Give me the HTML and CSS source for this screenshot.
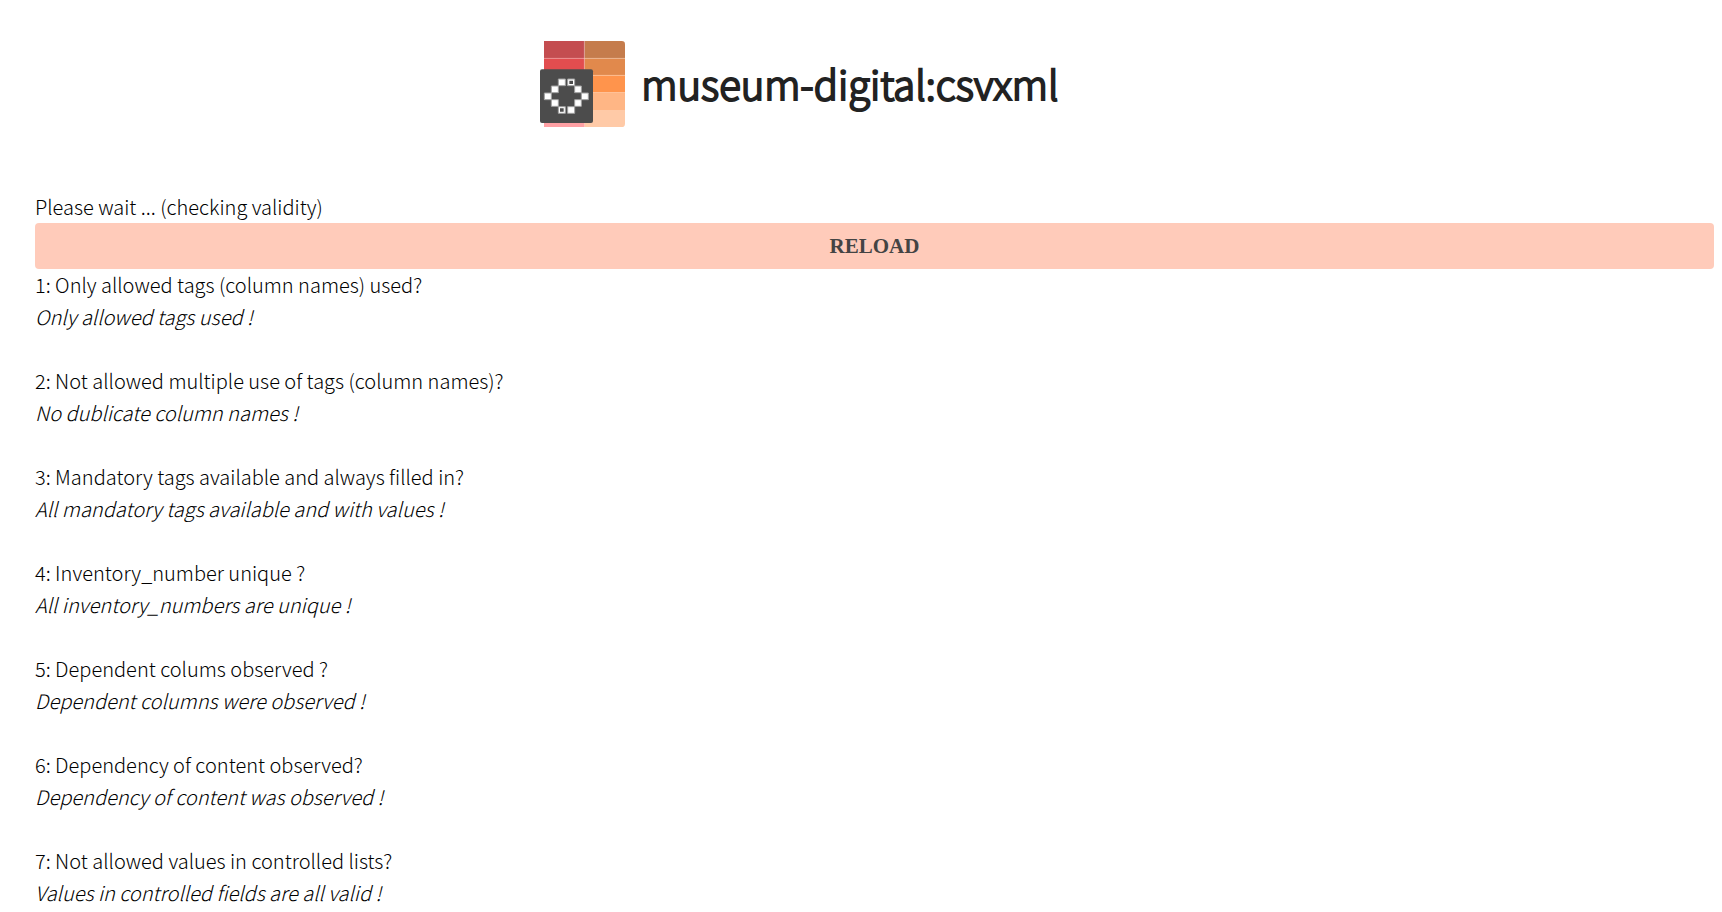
FILE: index.html
```html
<!DOCTYPE html>
<html lang="en">
<head>
<meta charset="utf-8">
<title>museum-digital:csvxml</title>
<link rel="stylesheet" href="styles.css">
</head>
<body>
<header class="masthead">
  <svg class="logo" viewBox="30 33 255 258" aria-hidden="true">
    <path fill="#c44d50" d="M42 33H164V85H42z"/>
    <path fill="#e24d4f" d="M42 85H164V136H42z"/>
    <path fill="#ffa0a4" d="M42 240H164V291H42z"/>
    <path fill="#c57c4c" d="M164 33H275Q285 33 285 43V85H164z"/>
    <path fill="#e1894c" d="M164 85H285V136H164z"/>
    <path fill="#ff944c" d="M164 136H285V187H164z"/>
    <path fill="#ffb685" d="M164 187H285V240H164z"/>
    <path fill="#ffcaa7" d="M164 240H285V281Q285 291 275 291H164z"/>
    <path fill="none" stroke="#fff" stroke-opacity=".25" stroke-width="3" d="M163 33V118M42 85H285M164 136H285"/>
    <rect x="30" y="118" width="159" height="161" rx="6" fill="#4c4c4c"/>
    <g fill="#fff" stroke="#a0a0a0" stroke-width="3">
      <path d="M85 147h21v20H85zM64 168h21v20H64zM43 189h21v20H43zM64 209h21v20H64zM134 168h20v20h-20zM154 189h21v20h-21zM134 209h20v20h-20zM113 230h21v20h-21z"/>
      <path d="M113 147h21v20h-21zM85 230h21v20H85z"/>
    </g>
    <path fill="#4c4c4c" d="M118 152h11v10h-11zM90 235h11v10H90z"/>
  </svg>
  <h1 class="title">museum-digital:csvxml</h1>
</header>
<main class="content">
  <p class="status">Please wait ... (checking validity)</p>
  <button class="reload" type="button">RELOAD</button>
  <section class="check"><p>1: Only allowed tags (column names) used?</p><p class="result">Only allowed tags used !</p></section>
  <section class="check"><p>2: Not allowed multiple use of tags (column names)?</p><p class="result">No dublicate column names !</p></section>
  <section class="check"><p>3: Mandatory tags available and always filled in?</p><p class="result">All mandatory tags available and with values !</p></section>
  <section class="check"><p>4: Inventory_number unique ?</p><p class="result">All inventory_numbers are unique !</p></section>
  <section class="check"><p>5: Dependent colums observed ?</p><p class="result">Dependent columns were observed !</p></section>
  <section class="check"><p>6: Dependency of content observed?</p><p class="result">Dependency of content was observed !</p></section>
  <section class="check"><p>7: Not allowed values in controlled lists?</p><p class="result">Values in controlled fields are all valid !</p></section>
</main>
</body>
</html>
```
FILE: styles.css
```css
* { box-sizing: border-box; }
body {
  margin: 0;
  padding: 0 8px 0 35px;
  background: #fff;
  color: #000;
  font-family: "Source Sans Pro", "Noto Sans CJK SC", sans-serif;
  font-size: 20px;
  font-weight: 300;
  line-height: 32px;
}
p { margin: 0; }
.masthead {
  display: flex;
  justify-content: center;
  align-items: flex-start;
  gap: 16px;
  padding: 41px 150px 64px 0;
}
.logo { width: 85px; height: 86px; flex: none; }
.title {
  margin: 0;
  color: #222;
  font-size: 40px;
  font-weight: 300;
  line-height: 84px;
  -webkit-text-stroke: 2px #222;
}
.reload {
  display: block;
  width: 100%;
  padding: 7px 16px;
  border: 0;
  border-radius: 4px;
  background: #ffcbba;
  color: #444;
  font: bold 21px/32px "Times New Roman", "Liberation Serif", serif;
}
.check { margin-bottom: 32px; }
.check:last-child { margin-bottom: 0; }
.result { font-style: italic; }
```
